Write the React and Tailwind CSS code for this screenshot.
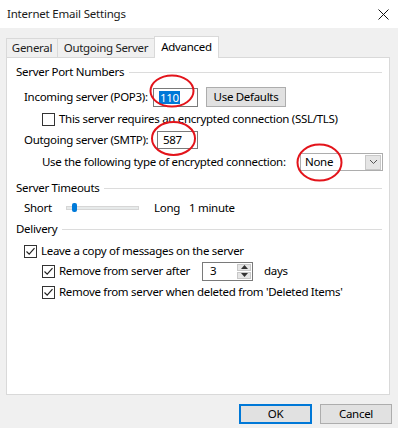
import React from 'react';

const font = { fontFamily: '"Noto Sans", "Open Sans", sans-serif' };

const Check = ({ checked }) => (
  <span className="w-[13px] h-[13px] border border-[#333] bg-white flex items-center justify-center shrink-0">
    {checked && (
      <svg width="11" height="11" viewBox="0 0 11 11">
        <path d="M1.5 5.5 L4.2 8.2 L9.5 2.2" fill="none" stroke="#222" strokeWidth="1.2" />
      </svg>
    )}
  </span>
);

const Section = ({ title }) => (
  <div className="h-[20px] flex items-center pl-[9px] pr-[7px]">
    <span className="whitespace-nowrap">{title}</span>
    <span className="flex-1 h-px bg-[#dcdcdc] ml-[5px]" />
  </div>
);

const App = () => {
  return (
    <div className="w-[398px] h-[428px] bg-[#f0f0f0] text-[11.5px] tracking-[-0.3px] text-black relative overflow-hidden" style={font}>
      {/* title bar */}
      <div className="h-[28px] bg-white flex items-center justify-between pl-[7px] pr-[8px]">
        <span className="text-[11.5px] tracking-[-0.2px] text-[#1a1a1a]">Internet Email Settings</span>
        <svg width="11" height="11" viewBox="0 0 11 11" className="mr-[1px]">
          <path d="M0.5 0.5 L10.5 10.5 M10.5 0.5 L0.5 10.5" stroke="#111" strokeWidth="1" />
        </svg>
      </div>

      {/* tabs */}
      <div className="flex items-end h-[29px] pl-[6px]">
        <div className="w-[52px] h-[19px] flex items-center justify-center border border-b-0 border-[#d9d9d9] bg-[#f0f0f0] text-[#222]">General</div>
        <div className="w-[97px] h-[19px] flex items-center justify-center border border-l-0 border-b-0 border-[#d9d9d9] bg-[#f0f0f0] text-[#222]">Outgoing Server</div>
        <div className="w-[65px] h-[22px] flex items-start justify-center pt-[1px] border border-b-0 border-[#d9d9d9] bg-white -mb-px relative z-10 -ml-px">Advanced</div>
      </div>

      {/* panel */}
      <div className="ml-[6px] w-[384px] h-[338px] bg-white border border-[#d9d9d9] pt-[4px]">
        <Section title="Server Port Numbers" />

        <div className="h-[20px] mt-[5px] flex items-center pl-[17px]">
          <span className="w-[129px] whitespace-nowrap">Incoming server (POP3):</span>
          <div className="w-[45px] h-[19px] border border-[#7a7a7a] flex items-center pl-[5px]">
            <span className="bg-[#0078d7] text-white leading-[13px] px-px">110</span>
          </div>
          <button className="ml-[8px] w-[80px] h-[20px] bg-[#e1e1e1] border border-[#adadad] flex items-center justify-center">Use Defaults</button>
        </div>

        <div className="h-[18px] mt-[3px] flex items-center pl-[35px] gap-[4px]">
          <Check />
          <span className="whitespace-nowrap">This server requires an encrypted connection (SSL/TLS)</span>
        </div>

        <div className="h-[18px] mt-[3px] flex items-center pl-[17px]">
          <span className="w-[133px] whitespace-nowrap">Outgoing server (SMTP):</span>
          <div className="w-[41px] h-[18px] border border-[#7a7a7a] flex items-center pl-[5px]">587</div>
        </div>

        <div className="h-[18px] mt-[4px] flex items-center pl-[35px]">
          <span className="w-[258px] whitespace-nowrap">Use the following type of encrypted connection:</span>
          <div className="w-[83px] h-[18px] border border-[#adadad] flex items-center justify-between pl-[4px] pr-px">
            <span>None</span>
            <span className="w-[16px] h-[15px] bg-[#e5e5e5] border border-[#c8c8c8] flex items-center justify-center">
              <svg width="9" height="6" viewBox="0 0 9 6">
                <path d="M1 1 L4.5 4.5 L8 1" fill="none" stroke="#555" strokeWidth="1" />
              </svg>
            </span>
          </div>
        </div>

        <div className="mt-[7px]">
          <Section title="Server Timeouts" />
        </div>

        <div className="h-[18px] mt-px flex items-center pl-[17px]">
          <span className="w-[42px]">Short</span>
          <div className="relative w-[73px] h-[4px] bg-[#e7eaea] border border-[#d6d6d6]">
            <span className="absolute left-[5px] -top-[4px] w-[5px] h-[9px] rounded-[2px] bg-[#007ad9]" />
          </div>
          <span className="ml-[15px] w-[35px]">Long</span>
          <span>1 minute</span>
        </div>

        <div className="mt-[2px]">
          <Section title="Delivery" />
        </div>

        <div className="h-[18px] mt-[3px] flex items-center pl-[17px] gap-[4px]">
          <Check checked />
          <span className="whitespace-nowrap">Leave a copy of messages on the server</span>
        </div>

        <div className="h-[20px] mt-[1px] flex items-center pl-[35px] gap-[4px]">
          <Check checked />
          <span className="w-[139px] whitespace-nowrap">Remove from server after</span>
          <div className="w-[51px] h-[19px] border border-[#7a7a7a] flex items-center justify-between pl-[7px] pr-px">
            <span>3</span>
            <span className="w-[14px] h-[15px] flex flex-col gap-px">
              <span className="flex-1 bg-[#e5e5e5] border border-[#c8c8c8] flex items-center justify-center">
                <svg width="7" height="4" viewBox="0 0 7 4"><path d="M0 4 L3.5 0 L7 4 Z" fill="#333" /></svg>
              </span>
              <span className="flex-1 bg-[#e5e5e5] border border-[#c8c8c8] flex items-center justify-center">
                <svg width="7" height="4" viewBox="0 0 7 4"><path d="M0 0 L3.5 4 L7 0 Z" fill="#333" /></svg>
              </span>
            </span>
          </div>
          <span className="ml-[7px]">days</span>
        </div>

        <div className="h-[18px] mt-[2px] flex items-center pl-[35px] gap-[4px]">
          <Check checked />
          <span className="whitespace-nowrap">Remove from server when deleted from 'Deleted Items'</span>
        </div>
      </div>

      {/* buttons */}
      <div className="flex justify-end gap-[8px] pr-[6px] mt-[9px]">
        <button className="w-[73px] h-[20px] bg-[#e1e1e1] border-2 border-[#0078d7] flex items-center justify-center">OK</button>
        <button className="w-[72px] h-[20px] bg-[#e1e1e1] border border-[#adadad] flex items-center justify-center">Cancel</button>
      </div>

      {/* red annotation circles */}
      <svg className="absolute left-0 top-0 pointer-events-none" width="398" height="428">
        <ellipse cx="172" cy="91" rx="21.5" ry="15.5" fill="none" stroke="#e3141b" strokeWidth="2" />
        <ellipse cx="173.5" cy="138.5" rx="21.5" ry="16.5" fill="none" stroke="#e3141b" strokeWidth="2" />
        <ellipse cx="319.5" cy="162.5" rx="22" ry="18" fill="none" stroke="#e3141b" strokeWidth="2" />
      </svg>
    </div>
  );
};

export default App;
